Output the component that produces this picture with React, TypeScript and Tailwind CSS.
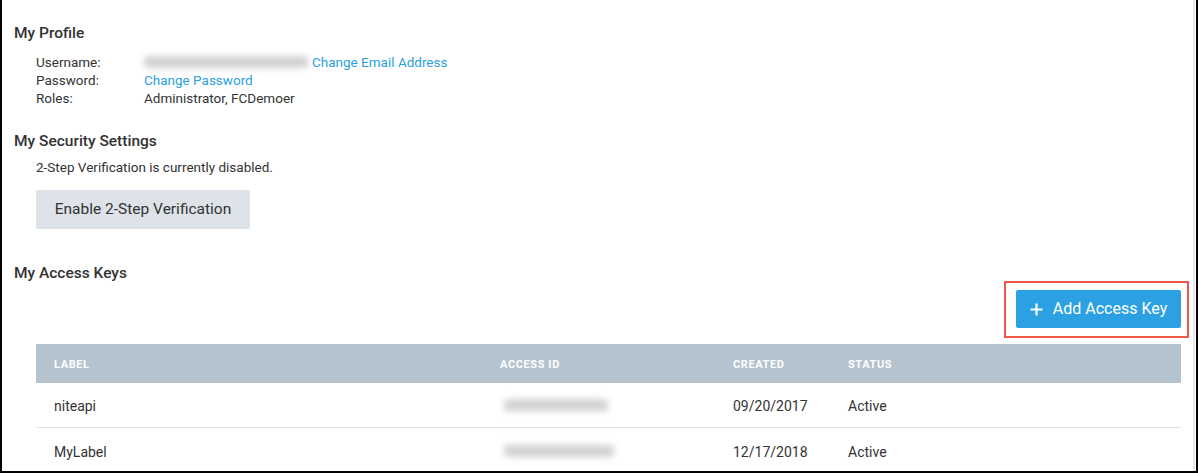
import React from "react";

const keys = [
  { label: "niteapi", created: "09/20/2017", status: "Active", idWidth: "w-[104px]" },
  { label: "MyLabel", created: "12/17/2018", status: "Active", idWidth: "w-[110px]" },
];

const Blurred = ({ className }: { className: string }) => (
  <span className={`inline-block h-[12px] rounded-sm bg-[#d2d2d2] blur-[3px] ${className}`} />
);

export default function App() {
  return (
    <div className="w-[1198px] h-[473px] overflow-hidden bg-white font-['Roboto',sans-serif] text-[#333] border-x-2 border-b-2 border-black flex">
      <div className="flex-1 flex flex-col pl-[12px] pr-[12px]">
        <div className="mt-[2px] h-px bg-[#dde4ea]" />

        {/* Profile */}
        <h2 className="mt-[21px] text-[15.5px] leading-[20px] font-medium">My Profile</h2>
        <div className="mt-[10px] pl-[22px] text-[13.5px] leading-[18px]">
          <div className="flex">
            <span className="w-[108px]">Username:</span>
            <span className="flex items-center gap-[4px]">
              <Blurred className="w-[164px]" />
              <a className="text-[#2c9fdf]">Change Email Address</a>
            </span>
          </div>
          <div className="flex">
            <span className="w-[108px]">Password:</span>
            <a className="text-[#2c9fdf]">Change Password</a>
          </div>
          <div className="flex">
            <span className="w-[108px]">Roles:</span>
            <span>Administrator, FCDemoer</span>
          </div>
        </div>

        {/* Security */}
        <h2 className="mt-[24px] text-[15.5px] leading-[20px] font-medium">My Security Settings</h2>
        <p className="mt-[7px] pl-[22px] text-[13.5px] leading-[18px]">2-Step Verification is currently disabled.</p>
        <div className="mt-[14px] pl-[22px]">
          <button className="h-[39px] w-[214px] rounded-[2px] bg-[#dde3e8] text-[15.5px] text-[#333]">
            Enable 2-Step Verification
          </button>
        </div>

        {/* Access keys */}
        <h2 className="mt-[34px] text-[15.5px] leading-[20px] font-medium">My Access Keys</h2>
        <div className="-mt-[2px] flex justify-end -mr-[8px]">
          <div className="border-2 border-[#f0584a] pl-[10px] pr-[6px] pt-[7px] pb-[8px]">
            <button className="flex h-[38px] w-[165px] items-center justify-center gap-[10px] rounded-[2px] bg-[#2ba1e3] text-[16px] text-white">
              <svg width="13" height="13" viewBox="0 0 13 13" fill="none" stroke="white" strokeWidth="2.2">
                <path d="M6.5 0.5v12M0.5 6.5h12" />
              </svg>
              Add Access Key
            </button>
          </div>
        </div>

        <div className="mt-[6px] ml-[22px]">
          <div className="grid h-[39px] grid-cols-[446px_233px_115px_1fr] items-center bg-[#b5c3cf] px-[18px] pt-[3px] text-[11px] font-bold tracking-[0.6px] text-white">
            <span>LABEL</span>
            <span>ACCESS ID</span>
            <span>CREATED</span>
            <span>STATUS</span>
          </div>
          {keys.map((k, i) => (
            <div
              key={k.label}
              className={`grid h-[45px] grid-cols-[446px_233px_115px_1fr] items-center px-[18px] text-[14px] ${
                i === 0 ? "border-b border-[#e2e2e2] pt-[2px]" : "pt-[4px]"
              }`}
            >
              <span>{k.label}</span>
              <span className="pl-[4px]">
                <Blurred className={k.idWidth} />
              </span>
              <span>{k.created}</span>
              <span>{k.status}</span>
            </div>
          ))}
        </div>
      </div>
      <div className="w-[2px] bg-[#e8e8e8] mr-[1px]" />
    </div>
  );
}
